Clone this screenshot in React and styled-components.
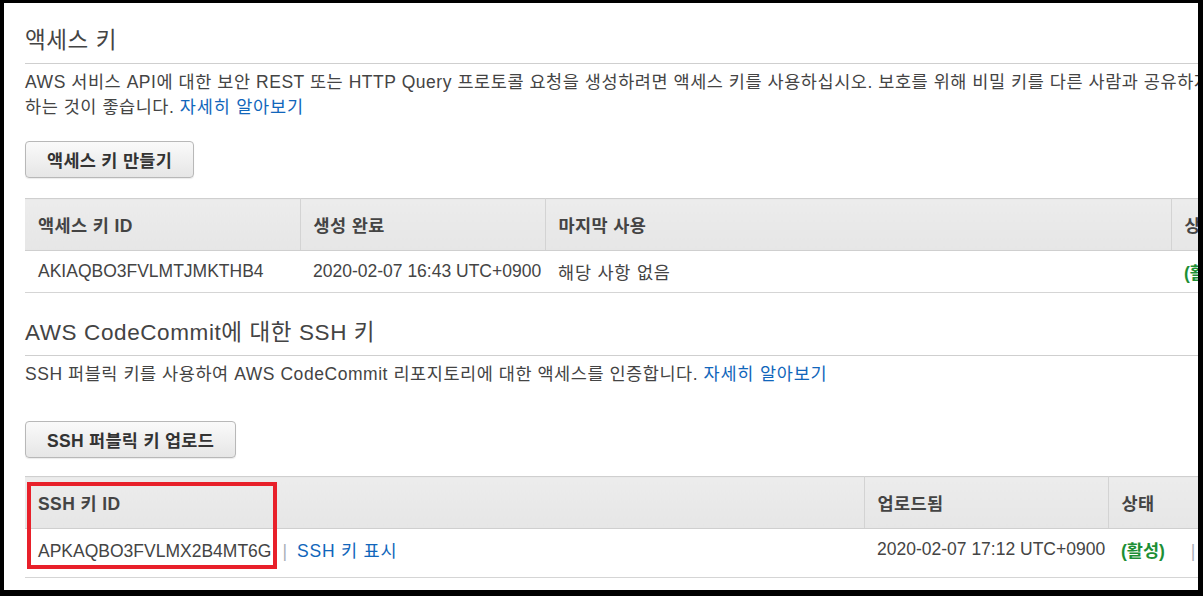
import styled, { createGlobalStyle } from "styled-components";

const GlobalStyle = createGlobalStyle`
  html, body {
    margin: 0;
    background: #000;
  }

  body {
    font-family: "Liberation Sans", "Noto Sans CJK KR", sans-serif;
    color: #444;
  }
`;

const accessKeys = [
  {
    id: "AKIAQBO3FVLMTJMKTHB4",
    created: "2020-02-07 16:43 UTC+0900",
    lastUsed: "해당 사항 없음",
    status: "(활성)",
  },
];

const sshKeys = [
  {
    id: "APKAQBO3FVLMX2B4MT6G",
    uploaded: "2020-02-07 17:12 UTC+0900",
    status: "(활성)",
  },
];

function App() {
  return (
    <>
      <GlobalStyle />
      <Frame>
        <Content>
          <Title $top={22}>액세스 키</Title>
          <Desc>
            AWS 서비스 API에 대한 보안 REST 또는 HTTP Query 프로토콜 요청을
            생성하려면 액세스 키를 사용하십시오. 보호를 위해 비밀 키를 다른
            사람과 공유하지 마십시오. 최상의 보안을 위해 액세스 키를 자주 교체
            <br />
            하는 것이 좋습니다. <Link href="#">자세히 알아보기</Link>
          </Desc>
          <ButtonRow $top={21}>
            <Button>액세스 키 만들기</Button>
          </ButtonRow>

          <TableWrap $top={20}>
            <Table>
              <colgroup>
                <col style={{ width: 275 }} />
                <col style={{ width: 245 }} />
                <col style={{ width: 626 }} />
                <col />
              </colgroup>
              <thead>
                <tr>
                  <Th>액세스 키 ID</Th>
                  <Th>생성 완료</Th>
                  <Th>마지막 사용</Th>
                  <Th>상태</Th>
                </tr>
              </thead>
              <tbody>
                {accessKeys.map((k) => (
                  <Tr key={k.id} $h={42}>
                    <Td>{k.id}</Td>
                    <Td>{k.created}</Td>
                    <Td>
                      <Hangul>{k.lastUsed}</Hangul>
                    </Td>
                    <Td>
                      <Status>{k.status}</Status>
                    </Td>
                  </Tr>
                ))}
              </tbody>
            </Table>
          </TableWrap>

          <Title $top={24}>AWS CodeCommit에 대한 SSH 키</Title>
          <Desc>
            SSH 퍼블릭 키를 사용하여 AWS CodeCommit 리포지토리에 대한 액세스를
            인증합니다. <Link href="#">자세히 알아보기</Link>
          </Desc>
          <ButtonRow $top={34}>
            <Button>SSH 퍼블릭 키 업로드</Button>
          </ButtonRow>

          <TableWrap $top={18}>
            <Table>
              <colgroup>
                <col style={{ width: 839 }} />
                <col style={{ width: 244 }} />
                <col />
              </colgroup>
              <thead>
                <tr>
                  <Th>SSH 키 ID</Th>
                  <Th>업로드됨</Th>
                  <Th>상태</Th>
                </tr>
              </thead>
              <tbody>
                {sshKeys.map((k) => (
                  <Tr key={k.id} $h={49} $pb={7}>
                    <Td>
                      {k.id}
                      <Pipe>|</Pipe>
                      <Link href="#">SSH 키 표시</Link>
                    </Td>
                    <Td>{k.uploaded}</Td>
                    <Td>
                      <Status>{k.status}</Status>
                      <Pipe $wide>|</Pipe>
                      <Link href="#">비활성화</Link>
                    </Td>
                  </Tr>
                ))}
              </tbody>
            </Table>
            <Highlight />
          </TableWrap>
        </Content>
      </Frame>
    </>
  );
}

export default App;

const Frame = styled.div`
  margin: 3px 0 0 4px;
  width: 1194px;
  height: 587px;
  background: #fff;
  overflow: hidden;
`;

const Content = styled.div`
  width: 1290px;
  padding-left: 21px;
`;

const Title = styled.h2`
  margin: ${(p) => p.$top}px 0 0;
  padding-bottom: 7px;
  border-bottom: 1px solid #cfcfcf;
  font-size: 22.5px;
  line-height: 31px;
  font-weight: 400;
  letter-spacing: 0.6px;
  color: #444;
`;

const Desc = styled.p`
  margin: 6px 0 0;
  width: 1600px;
  font-size: 17.5px;
  line-height: 25px;
  letter-spacing: 0.55px;
  color: #444;
`;

const Hangul = styled.span`
  letter-spacing: 0.8px;
`;

const Link = styled.a`
  color: #1166bb;
  text-decoration: none;
  letter-spacing: 0.8px;
`;

const ButtonRow = styled.div`
  margin-top: ${(p) => p.$top}px;
  display: flex;
`;

const Button = styled.button`
  height: 37px;
  padding: 0 21px;
  font-family: inherit;
  font-size: 17.5px;
  font-weight: bold;
  letter-spacing: 0.3px;
  color: #333;
  background: linear-gradient(#fafafa, #e6e6e6);
  border: 1px solid #b8b8b8;
  border-radius: 4px;
  box-shadow: 0 1px 1px rgba(0, 0, 0, 0.08);
`;

const TableWrap = styled.div`
  position: relative;
  margin-top: ${(p) => p.$top}px;
`;

const Table = styled.table`
  width: 100%;
  table-layout: fixed;
  border-collapse: collapse;
  border-top: 1px solid #cfcfcf;
  font-size: 17.5px;
`;

const Th = styled.th`
  height: 51px;
  padding: 0 13px;
  text-align: left;
  font-weight: bold;
  letter-spacing: 0.4px;
  color: #444;
  background: linear-gradient(#ececec, #e6e6e6);
  border-bottom: 1px solid #cfcfcf;
  white-space: nowrap;
  overflow: hidden;

  & + & {
    border-left: 1px solid #d3d3d3;
  }
`;

const Tr = styled.tr`
  height: ${(p) => p.$h}px;
  border-bottom: 1px solid #d5d5d5;

  td {
    padding-bottom: ${(p) => p.$pb || 0}px;
  }
`;

const Td = styled.td`
  padding: 0 13px;
  white-space: nowrap;
  overflow: hidden;
  color: #444;
`;

const Pipe = styled.span`
  margin: 0 ${(p) => (p.$wide ? 22 : 10)}px 0 ${(p) => (p.$wide ? 26 : 11)}px;
  color: #aab0b8;
`;

const Status = styled.span`
  color: #1d8f35;
  font-weight: bold;
`;

const Highlight = styled.div`
  position: absolute;
  left: 2px;
  top: 6px;
  width: 242px;
  height: 79px;
  border: 4px solid #e8202a;
  pointer-events: none;
`;
